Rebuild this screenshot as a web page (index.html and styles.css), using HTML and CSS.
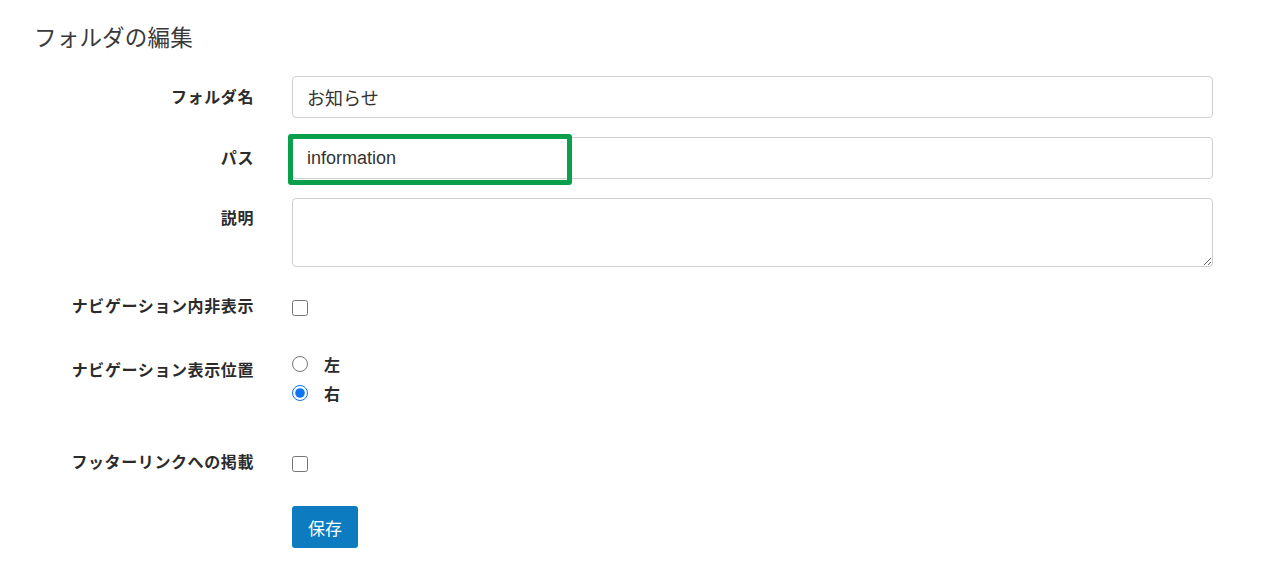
FILE: index.html
```html
<!DOCTYPE html>
<html lang="ja">
<head>
<meta charset="utf-8">
<title>フォルダの編集</title>
<link rel="stylesheet" href="styles.css">
</head>
<body>
<div class="page">
  <h1 class="title">フォルダの編集</h1>
  <form class="form">
    <div class="row row-first">
      <label class="label">フォルダ名</label>
      <div class="field"><input class="input" type="text" value="お知らせ"></div>
    </div>
    <div class="row row-input">
      <label class="label">パス</label>
      <div class="field highlight-wrap">
        <input class="input" type="text" value="information">
        <span class="highlight"></span>
      </div>
    </div>
    <div class="row row-input">
      <label class="label label-ta">説明</label>
      <div class="field"><textarea class="textarea"></textarea></div>
    </div>
    <div class="row row-check1">
      <label class="label label-plain">ナビゲーション内非表示</label>
      <div class="field"><input class="check check-a" type="checkbox"></div>
    </div>
    <div class="row row-radio">
      <label class="label label-radio">ナビゲーション表示位置</label>
      <div class="field radios">
        <label class="radio-line"><input class="radio" type="radio" name="pos"><span>左</span></label>
        <label class="radio-line"><input class="radio" type="radio" name="pos" checked><span>右</span></label>
      </div>
    </div>
    <div class="row row-check2">
      <label class="label label-plain">フッターリンクへの掲載</label>
      <div class="field"><input class="check check-b" type="checkbox"></div>
    </div>
    <div class="row row-button">
      <span class="label"></span>
      <div class="field"><button class="btn" type="button">保存</button></div>
    </div>
  </form>
</div>
</body>
</html>
```

FILE: styles.css
```css
html, body {
  margin: 0;
  padding: 0;
  background: #fff;
}
body {
  font-family: "Liberation Sans", "Noto Sans CJK JP", sans-serif;
  color: #333;
}
.page {
  padding: 25px 0 0 0;
}
.title {
  margin: 0 0 0 34px;
  font-size: 22.5px;
  line-height: 27px;
  font-weight: 400;
  color: #3a3a3a;
  letter-spacing: 0.2px;
}
.form {
  margin-top: 24px;
}
.row {
  display: grid;
  grid-template-columns: 254px 921px;
  column-gap: 38px;
}
.row-input { margin-top: 19px; }
.row-check1 { margin-top: 28px; }
.row-radio { margin-top: 30px; }
.row-check2 { margin-top: 44px; }
.row-button { margin-top: 31px; }

.label {
  text-align: right;
  font-size: 16px;
  font-weight: 700;
  line-height: 24px;
  padding-top: 10px;
  color: #2b2b2b;
  letter-spacing: 0.6px;
}
.label-ta { padding-top: 9px; }
.label-plain { padding-top: 0; }
.label-radio { padding-top: 10px; }

.field {
  min-width: 0;
}
.input {
  box-sizing: border-box;
  display: block;
  width: 100%;
  height: 42px;
  border: 1px solid #cfcfcf;
  border-radius: 4px;
  padding: 0 14px;
  font-family: "Liberation Sans", "Noto Sans CJK JP", sans-serif;
  font-size: 18px;
  color: #333;
  background: #fff;
  outline: none;
}
.highlight-wrap {
  position: relative;
}
.highlight {
  position: absolute;
  left: -4px;
  top: -3px;
  width: 284px;
  height: 51px;
  box-sizing: border-box;
  border: 5px solid #0aa04b;
  border-radius: 3px;
  pointer-events: none;
}
.textarea {
  box-sizing: border-box;
  display: block;
  width: 100%;
  height: 69px;
  border: 1px solid #cfcfcf;
  border-radius: 4px;
  padding: 8px 14px;
  font-family: "Liberation Sans", "Noto Sans CJK JP", sans-serif;
  font-size: 18px;
  resize: vertical;
  outline: none;
}
.check {
  display: block;
  width: 16px;
  height: 16px;
  margin: 5px 0 0 0;
}
.check-b { margin-top: 5px; }
.radios {
  display: flex;
  flex-direction: column;
}
.radio-line {
  display: flex;
  align-items: center;
  height: 29px;
  font-size: 16px;
  font-weight: 700;
  color: #2b2b2b;
}
.radio {
  width: 16px;
  height: 16px;
  margin: 0 16px 0 0;
  accent-color: #0b75f5;
}
.btn {
  display: block;
  width: 66px;
  height: 42px;
  border: none;
  border-radius: 3px;
  background: #0c7bbf;
  color: #fff;
  font-family: "Liberation Sans", "Noto Sans CJK JP", sans-serif;
  font-size: 17px;
  padding: 0;
}
```
